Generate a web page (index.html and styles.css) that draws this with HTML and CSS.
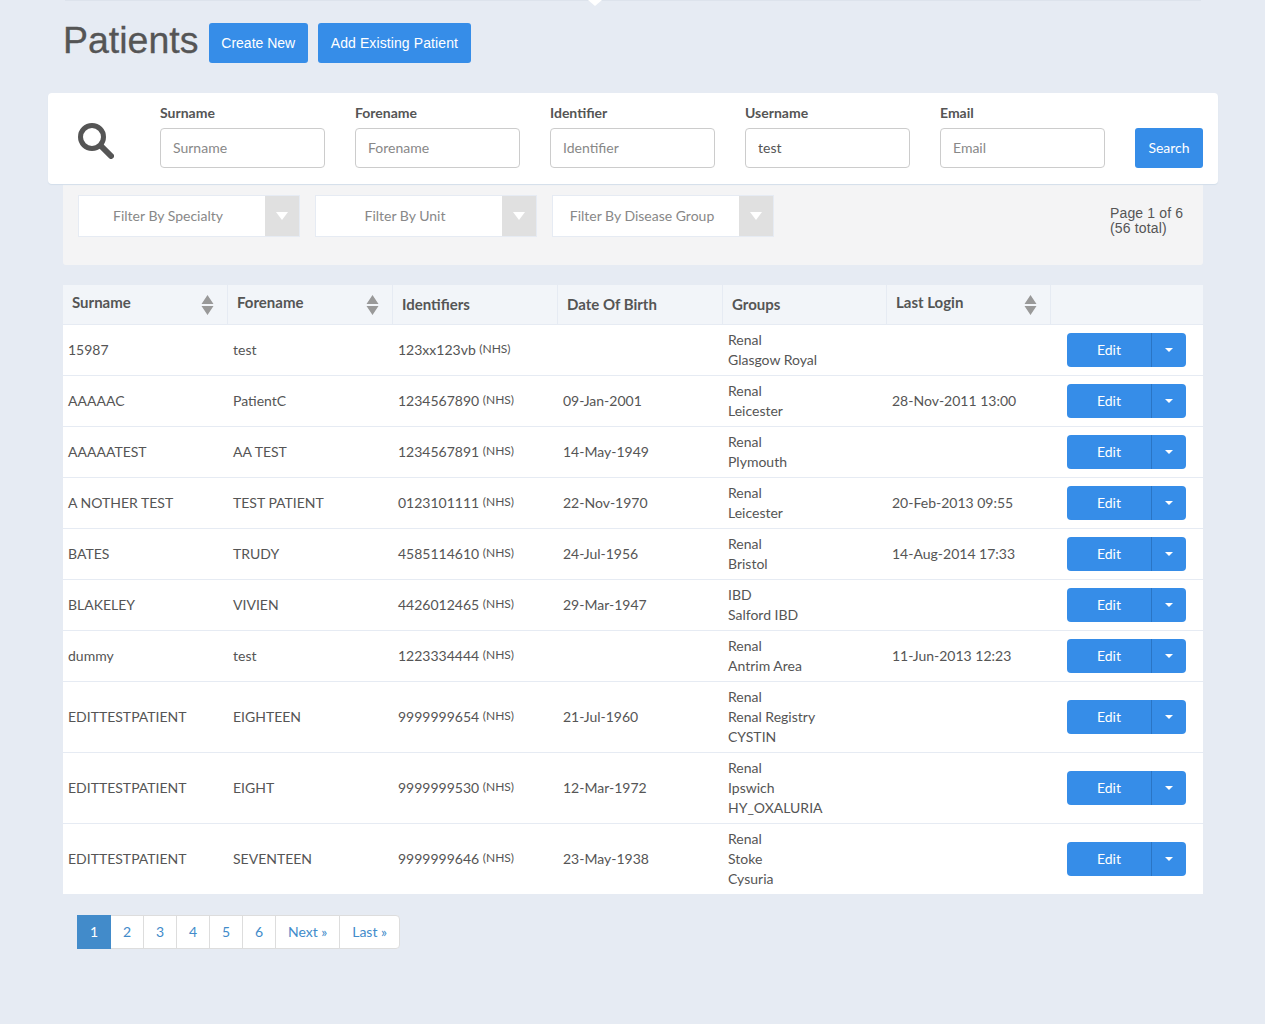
FILE: index.html
```html
<!DOCTYPE html>
<html>
<head>
    <title>Patients</title>
    <link rel="stylesheet" href="styles.css">
</head>

<body>
    <div class="container">

        <div class="top-rule"></div>

        <div class="title-row">
            <h1>Patients</h1>
            <a class="btn title-btn" href="#">Create New</a>
            <a class="btn title-btn title-btn-wide" href="#">Add Existing Patient</a>
        </div>

        <form class="search-card">
            <svg class="search-icon" width="36" height="36" viewBox="0 0 36 36">
                <circle cx="14" cy="14" r="11.5" fill="none" stroke="#555" stroke-width="5"/>
                <path d="M23 23 L33 33" fill="none" stroke="#555" stroke-width="6" stroke-linecap="round"/>
            </svg>
            <div class="field">
                <label for="surname">Surname</label>
                <input type="text" id="surname" placeholder="Surname">
            </div>
            <div class="field">
                <label for="forename">Forename</label>
                <input type="text" id="forename" placeholder="Forename">
            </div>
            <div class="field">
                <label for="identifier">Identifier</label>
                <input type="text" id="identifier" placeholder="Identifier">
            </div>
            <div class="field">
                <label for="username">Username</label>
                <input type="text" id="username" placeholder="Username" value="test">
            </div>
            <div class="field">
                <label for="email">Email</label>
                <input type="text" id="email" placeholder="Email">
            </div>
            <button type="button" class="btn search-btn">Search</button>
        </form>

        <div class="filter-panel">
            <div class="filter"><span class="filter-text">Filter By Specialty</span><span class="filter-arrow"></span></div>
            <div class="filter"><span class="filter-text">Filter By Unit</span><span class="filter-arrow"></span></div>
            <div class="filter"><span class="filter-text">Filter By Disease Group</span><span class="filter-arrow"></span></div>
            <div class="page-count">Page 1 of 6<br>(56 total)</div>
        </div>

        <table class="patients">
            <thead>
                <tr>
                    <th class="col-name"><div class="sort-head"><span>Surname</span><svg width="13" height="20" viewBox="0 0 13 20"><path d="M6.5 0 L12.5 9 L0.5 9 Z M0.5 11 L12.5 11 L6.5 20 Z" fill="#999"/></svg></div></th>
                    <th class="col-name"><div class="sort-head"><span>Forename</span><svg width="13" height="20" viewBox="0 0 13 20"><path d="M6.5 0 L12.5 9 L0.5 9 Z M0.5 11 L12.5 11 L6.5 20 Z" fill="#999"/></svg></div></th>
                    <th class="col-name">Identifiers</th>
                    <th class="col-name">Date Of Birth</th>
                    <th class="col-short">Groups</th>
                    <th class="col-short"><div class="sort-head"><span>Last Login</span><svg width="13" height="20" viewBox="0 0 13 20"><path d="M6.5 0 L12.5 9 L0.5 9 Z M0.5 11 L12.5 11 L6.5 20 Z" fill="#999"/></svg></div></th>
                    <th></th>
                </tr>
            </thead>
            <tbody>
                <tr>
                    <td>15987</td>
                    <td>test</td>
                    <td>123xx123vb <span class="id-type">(NHS)</span></td>
                    <td></td>
                    <td>Renal<br>Glasgow Royal</td>
                    <td></td>
                    <td class="actions"><div class="split"><a class="split-main" href="#">Edit</a><a class="split-caret" href="#"></a></div></td>
                </tr>
                <tr>
                    <td>AAAAAC</td>
                    <td>PatientC</td>
                    <td>1234567890 <span class="id-type">(NHS)</span></td>
                    <td>09-Jan-2001</td>
                    <td>Renal<br>Leicester</td>
                    <td>28-Nov-2011 13:00</td>
                    <td class="actions"><div class="split"><a class="split-main" href="#">Edit</a><a class="split-caret" href="#"></a></div></td>
                </tr>
                <tr>
                    <td>AAAAATEST</td>
                    <td>AA TEST</td>
                    <td>1234567891 <span class="id-type">(NHS)</span></td>
                    <td>14-May-1949</td>
                    <td>Renal<br>Plymouth</td>
                    <td></td>
                    <td class="actions"><div class="split"><a class="split-main" href="#">Edit</a><a class="split-caret" href="#"></a></div></td>
                </tr>
                <tr>
                    <td>A NOTHER TEST</td>
                    <td>TEST PATIENT</td>
                    <td>0123101111 <span class="id-type">(NHS)</span></td>
                    <td>22-Nov-1970</td>
                    <td>Renal<br>Leicester</td>
                    <td>20-Feb-2013 09:55</td>
                    <td class="actions"><div class="split"><a class="split-main" href="#">Edit</a><a class="split-caret" href="#"></a></div></td>
                </tr>
                <tr>
                    <td>BATES</td>
                    <td>TRUDY</td>
                    <td>4585114610 <span class="id-type">(NHS)</span></td>
                    <td>24-Jul-1956</td>
                    <td>Renal<br>Bristol</td>
                    <td>14-Aug-2014 17:33</td>
                    <td class="actions"><div class="split"><a class="split-main" href="#">Edit</a><a class="split-caret" href="#"></a></div></td>
                </tr>
                <tr>
                    <td>BLAKELEY</td>
                    <td>VIVIEN</td>
                    <td>4426012465 <span class="id-type">(NHS)</span></td>
                    <td>29-Mar-1947</td>
                    <td>IBD<br>Salford IBD</td>
                    <td></td>
                    <td class="actions"><div class="split"><a class="split-main" href="#">Edit</a><a class="split-caret" href="#"></a></div></td>
                </tr>
                <tr>
                    <td>dummy</td>
                    <td>test</td>
                    <td>1223334444 <span class="id-type">(NHS)</span></td>
                    <td></td>
                    <td>Renal<br>Antrim Area</td>
                    <td>11-Jun-2013 12:23</td>
                    <td class="actions"><div class="split"><a class="split-main" href="#">Edit</a><a class="split-caret" href="#"></a></div></td>
                </tr>
                <tr>
                    <td>EDITTESTPATIENT</td>
                    <td>EIGHTEEN</td>
                    <td>9999999654 <span class="id-type">(NHS)</span></td>
                    <td>21-Jul-1960</td>
                    <td>Renal<br>Renal Registry<br>CYSTIN</td>
                    <td></td>
                    <td class="actions"><div class="split"><a class="split-main" href="#">Edit</a><a class="split-caret" href="#"></a></div></td>
                </tr>
                <tr>
                    <td>EDITTESTPATIENT</td>
                    <td>EIGHT</td>
                    <td>9999999530 <span class="id-type">(NHS)</span></td>
                    <td>12-Mar-1972</td>
                    <td>Renal<br>Ipswich<br>HY_OXALURIA</td>
                    <td></td>
                    <td class="actions"><div class="split"><a class="split-main" href="#">Edit</a><a class="split-caret" href="#"></a></div></td>
                </tr>
                <tr>
                    <td>EDITTESTPATIENT</td>
                    <td>SEVENTEEN</td>
                    <td>9999999646 <span class="id-type">(NHS)</span></td>
                    <td>23-May-1938</td>
                    <td>Renal<br>Stoke<br>Cysuria</td>
                    <td></td>
                    <td class="actions"><div class="split"><a class="split-main" href="#">Edit</a><a class="split-caret" href="#"></a></div></td>
                </tr>
            </tbody>
        </table>

        <ul class="pagination">
            <li class="active"><a href="#">1</a></li>
            <li><a href="#">2</a></li>
            <li><a href="#">3</a></li>
            <li><a href="#">4</a></li>
            <li><a href="#">5</a></li>
            <li><a href="#">6</a></li>
            <li><a href="#">Next &raquo;</a></li>
            <li><a href="#">Last &raquo;</a></li>
        </ul>

    </div>
</body>
</html>
```

FILE: styles.css
```css
body {
    margin: 0;
    background: #e6ebf3;
    font-family: "Lato", sans-serif;
    font-size: 14px;
    line-height: 20px;
    color: #555;
}

a {
    text-decoration: none;
}

.container {
    width: 1140px;
    margin-left: 63px;
}

/* line under the (cut off) nav, with its little notch */
.top-rule {
    position: relative;
    height: 1px;
    margin: 0 2px;
    background: #dde3ec;
}

.top-rule:after {
    content: "";
    position: absolute;
    left: 523px;
    top: 0;
    border-left: 7px solid transparent;
    border-right: 7px solid transparent;
    border-top: 6px solid #fff;
}

.title-row {
    display: flex;
    align-items: center;
    height: 40px;
    padding-top: 22px;
    margin-bottom: 30px;
}

h1 {
    margin: 0 10.3px 7px 0;
    font-family: "Liberation Sans", sans-serif;
    font-size: 37.5px;
    font-weight: 400;
    line-height: 40px;
    color: #555;
    -webkit-text-stroke: 0.3px #555;
}

.btn {
    display: block;
    box-sizing: border-box;
    height: 40px;
    line-height: 40px;
    border: 0;
    border-radius: 3px;
    background: #368de8;
    color: #fff;
    text-align: center;
}

.title-btn {
    padding: 0 12.5px;
    margin-right: 10px;
    font-family: "Liberation Sans", sans-serif;
    font-size: 14px;
}

.title-btn-wide {
    padding: 0 13px;
    letter-spacing: 0.1px;
}

.search-card {
    position: relative;
    display: flex;
    align-items: flex-end;
    gap: 30px;
    box-sizing: border-box;
    height: 91px;
    margin: 0 -15px;
    padding: 0 15px 16px 30px;
    background: #fff;
    border-radius: 4px;
    box-shadow: 0 1px 1px #d3deea;
}

.search-icon {
    align-self: flex-start;
    margin: 30px 16px 0 0;
}

.field {
    width: 165px;
}

.field label {
    display: block;
    margin-bottom: 5px;
    font-weight: 700;
}

.field input {
    display: block;
    box-sizing: border-box;
    width: 165px;
    height: 40px;
    padding: 0 12px 2px;
    border: 1px solid #ccc;
    border-radius: 4px;
    font-family: "Lato", sans-serif;
    font-size: 14px;
    color: #555;
}

.field input::placeholder {
    color: #888;
}

.search-btn {
    width: 68px;
    padding-bottom: 2px;
    line-height: 38px;
    font-family: "Lato", sans-serif;
    font-size: 14px;
}

.filter-panel {
    display: flex;
    align-items: flex-start;
    gap: 15px;
    height: 81px;
    box-sizing: border-box;
    padding: 11px 15px;
    background: #f4f4f5;
    border-radius: 0 0 3px 3px;
}

.filter {
    display: flex;
    box-sizing: border-box;
    width: 222px;
    height: 42px;
    background: #fff;
    border: 1px solid #e6ebf3;
}

.filter-text {
    flex: 1;
    padding-right: 8px;
    line-height: 40px;
    text-align: center;
    color: #888;
}

.filter-arrow {
    display: flex;
    align-items: center;
    justify-content: center;
    width: 34px;
    background: #e0e0e0;
}

.filter-arrow:after {
    content: "";
    border-left: 6px solid transparent;
    border-right: 6px solid transparent;
    border-top: 8px solid #fff;
}

.page-count {
    width: 78px;
    margin: 11px 0 0 auto;
    font-family: "Liberation Sans", sans-serif;
    font-size: 14px;
    line-height: 15px;
    letter-spacing: 0.15px;
}

.patients {
    width: 1140px;
    margin-top: 20px;
    table-layout: fixed;
    border-collapse: separate;
    border-spacing: 0;
    background: #fff;
}

.patients th {
    box-sizing: border-box;
    height: 40px;
    padding: 0 0 2px 9px;
    background: #f2f5f9;
    border-right: 1px solid #e6ebf3;
    border-bottom: 1px solid #e6ebf3;
    font-size: 15px;
    font-weight: 700;
    text-align: left;
    vertical-align: middle;
}

.col-name {
    width: 165px;
}

.col-short {
    width: 164px;
}

.patients th:last-child {
    border-right: 0;
}

.sort-head {
    display: flex;
    align-items: center;
    justify-content: space-between;
    padding-right: 13px;
}

.sort-head span {
    padding-bottom: 4px;
}

.sort-head svg {
    position: relative;
    top: 1px;
}

.patients td {
    padding: 5px;
    border-bottom: 1px solid #e6ebf3;
    color: #555;
}

.id-type {
    position: relative;
    top: -2px;
    font-size: 12px;
}

.patients td.actions {
    padding: 0 17px 0 16px;
}

.split {
    display: flex;
    height: 34px;
    line-height: 34px;
    text-align: center;
    color: #fff;
}

.split-main {
    width: 84px;
    background: #368de8;
    border-radius: 4px 0 0 4px;
    color: #fff;
}

.split-caret {
    display: flex;
    flex: 1;
    align-items: center;
    justify-content: center;
    background: #368de8;
    border-left: 1px solid #2a75c5;
    border-radius: 0 4px 4px 0;
}

.split-caret:after {
    content: "";
    border-left: 4px solid transparent;
    border-right: 4px solid transparent;
    border-top: 4px solid #fff;
}

.pagination {
    display: flex;
    list-style: none;
    margin: 20px 0 0 14px;
    padding: 0;
}

.pagination a {
    display: block;
    padding: 6px 11.95px;
    margin-left: -1px;
    background: #fff;
    border: 1px solid #ddd;
    color: #428bca;
}

.pagination li:first-child a {
    margin-left: 0;
}

.pagination li:last-child a {
    border-radius: 0 4px 4px 0;
}

.pagination .active a {
    position: relative;
    z-index: 1;
    background: #428bca;
    border-color: #428bca;
    color: #fff;
}
```
